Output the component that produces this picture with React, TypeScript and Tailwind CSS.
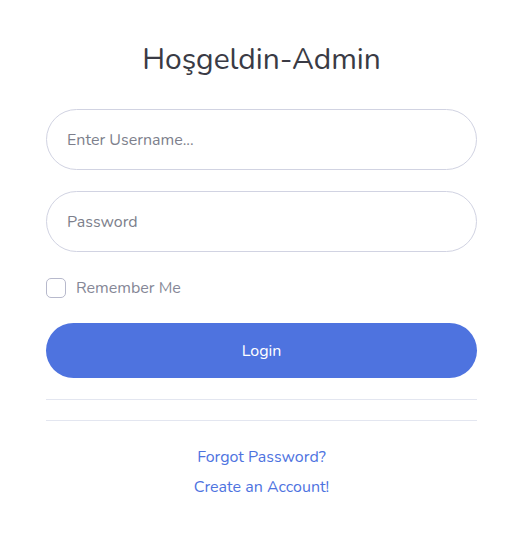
const App = () => {
  return (
    <div className="min-h-screen bg-white font-['Nunito','Noto_Sans',sans-serif]">
      <div className="ml-[46px] w-[431px] pt-[40px]">
        <h1 className="text-center text-[30px] leading-[40px] text-[#3a3b45] mb-[29px]">
          Hoşgeldin-Admin
        </h1>
        <form className="flex flex-col" onSubmit={(e) => e.preventDefault()}>
          <input
            type="text"
            placeholder="Enter Username..."
            className="h-[61px] w-full rounded-full border border-[#d1d3e2] px-[20px] text-[16px] text-[#6e707e] placeholder:text-[#7d7f8c] outline-none"
          />
          <input
            type="password"
            placeholder="Password"
            className="mt-[21px] h-[61px] w-full rounded-full border border-[#d1d3e2] px-[20px] text-[16px] text-[#6e707e] placeholder:text-[#7d7f8c] outline-none"
          />
          <label className="mt-[26px] flex h-[20px] items-center">
            <span className="h-[20px] w-[20px] rounded-[5px] border border-[#b7b9cc] bg-white" />
            <span className="ml-[10px] text-[16px] text-[#858796]">Remember Me</span>
          </label>
          <button
            type="submit"
            className="mt-[25px] h-[55px] w-full rounded-full bg-[#4e73df] text-[16px] text-white"
          >
            Login
          </button>
        </form>
        <div className="mt-[21px] border-t border-[#e3e6f0]" />
        <div className="mt-[20px] border-t border-[#e3e6f0]" />
        <div className="mt-[24px] flex flex-col items-center text-[16px] text-[#4e73df]">
          <a className="leading-[24px]">Forgot Password?</a>
          <a className="mt-[6px] leading-[24px]">Create an Account!</a>
        </div>
      </div>
    </div>
  );
};

export default App;
